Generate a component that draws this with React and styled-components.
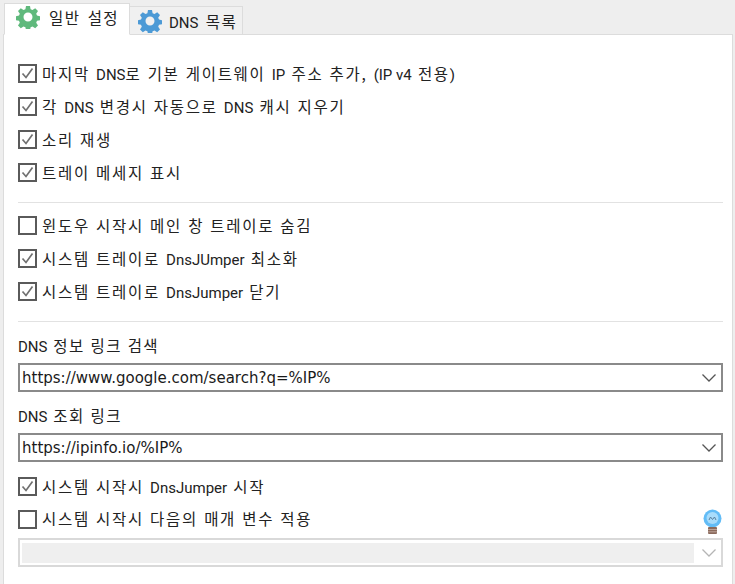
import React from "react";
import styled, { createGlobalStyle } from "styled-components";

const GlobalStyle = createGlobalStyle`
  html, body {
    margin: 0;
    padding: 0;
    background: #eeeeee;
  }
  body {
    width: 735px;
    height: 584px;
    overflow: hidden;
    font-family: "Noto Sans CJK KR", "Liberation Sans", sans-serif;
  }
`;

const Window = styled.div`
  width: 735px;
  height: 584px;
  box-sizing: border-box;
  padding: 3px 2px 0 3px;
  background: #eeeeee;
  overflow: hidden;
`;

const TabBar = styled.div`
  display: flex;
  align-items: flex-end;
  height: 32px;
  padding-left: 1px;
  margin-bottom: -1px;
  position: relative;
  z-index: 1;
`;

const Tab = styled.div`
  display: flex;
  align-items: center;
  box-sizing: border-box;
  gap: ${(p) => (p.$active ? "9px" : "7px")};
  height: ${(p) => (p.$active ? "32px" : "29px")};
  width: ${(p) => (p.$active ? "126px" : "113px")};
  padding-left: ${(p) => (p.$active ? "11px" : "8px")};
  padding-bottom: ${(p) => (p.$active ? "5px" : "0")};
  background: ${(p) => (p.$active ? "#fff" : "#f0f0f0")};
  border: 1px solid #dcdcdc;
  border-bottom: ${(p) => (p.$active ? "1px solid #fff" : "1px solid #dcdcdc")};
  border-left-width: ${(p) => (p.$active ? "1px" : "0")};
  font-size: 15.5px;
  color: #222;
  letter-spacing: 1.4px;
  word-spacing: 2.5px;
`;

const Panel = styled.div`
  box-sizing: border-box;
  height: 560px;
  background: #fff;
  border: 1px solid #dcdcdc;
  padding: 22px 9px 0 14px;
`;

const Group = styled.div`
  display: flex;
  flex-direction: column;
`;

const Row = styled.div`
  display: flex;
  align-items: center;
  height: ${(p) => p.$height || "33px"};
  gap: 5px;
  font-size: 15.5px;
  letter-spacing: 1.7px;
  word-spacing: 1px;
  color: #222;
  white-space: nowrap;
`;

const RowText = styled.span`
  position: relative;
  top: -1px;
`;

const Latin = styled.span`
  font-family: Roboto, "Liberation Sans", sans-serif;
  font-size: 15px;
  letter-spacing: 0;
  word-spacing: 0;
`;

const Box = styled.span`
  display: flex;
  align-items: center;
  justify-content: center;
  box-sizing: border-box;
  width: 19px;
  height: 19px;
  flex: none;
  background: #fff;
  border: 2px solid #5a5a5a;
`;

const Divider = styled.div`
  height: 1px;
  background: #e2e2e2;
  margin: ${(p) => p.$margin};
`;

const FieldLabel = styled.div`
  height: 21px;
  font-size: 15.5px;
  letter-spacing: 1.4px;
  word-spacing: 1px;
  line-height: 19px;
  color: #222;
  margin-bottom: 6px;
`;

const Select = styled.div`
  display: flex;
  align-items: center;
  justify-content: space-between;
  box-sizing: border-box;
  height: 29px;
  padding: 0 2px 0 2px;
  margin-top: ${(p) => p.$before || "0"};
  margin-bottom: ${(p) => p.$after || "0"};
  background: #fff;
  border: 2px solid ${(p) => (p.$disabled ? "#d9d9d9" : "#8a8a8a")};
  font-family: "DejaVu Sans", sans-serif;
  font-size: 15px;
  color: #1a1a1a;
`;

const DisabledFill = styled.div`
  width: 672px;
  height: 20px;
  background: #efefef;
`;

const HintRow = styled.div`
  display: flex;
  align-items: flex-start;
  justify-content: space-between;
`;

const BulbHolder = styled.span`
  display: flex;
  height: 26px;
  margin: 6px 1px 0 0;
`;

const Gear = ({ color }) => (
  <svg width="24" height="24" viewBox="0 0 24 24">
    <path
      fill={color}
      fillRule="evenodd"
      d="M10 1h4l.6 3.2 1.9.8 2.7-1.8 2.8 2.8-1.8 2.7.8 1.9 3 .6v4l-3 .6-.8 1.9 1.8 2.7-2.8 2.8-2.7-1.8-1.9.8-.6 3h-4l-.6-3-1.9-.8-2.7 1.8-2.8-2.8 1.8-2.7-.8-1.9-3-.6v-4l3-.6.8-1.9-1.8-2.7 2.8-2.8 2.7 1.8 1.9-.8zM12 7.5a4.5 4.5 0 1 0 0 9 4.5 4.5 0 0 0 0-9z"
    />
  </svg>
);

const Tick = () => (
  <svg width="15" height="15" viewBox="0 0 15 15">
    <path d="M2.5 7.5l3.5 4 6.5-9" fill="none" stroke="#707070" strokeWidth="1.7" />
  </svg>
);

const Chevron = ({ color }) => (
  <svg width="16" height="10" viewBox="0 0 16 10" style={{ marginRight: 2 }}>
    <path d="M1.5 1.5L8 8l6.5-6.5" fill="none" stroke={color} strokeWidth="1.3" />
  </svg>
);

const Bulb = () => (
  <svg width="19" height="26" viewBox="0 0 19 26">
    <circle cx="9.5" cy="9.5" r="9" fill="#62bcf6" />
    <circle cx="9.5" cy="9" r="6" fill="#a8dcfb" />
    <path d="M6 11l1.5-3 2 2.5 2-2.5 1.5 3" fill="none" stroke="#5a7f9c" strokeWidth="1" />
    <rect x="5" y="18" width="9" height="7" rx="1" fill="#8a6a5c" />
    <path d="M5 20.5h9M5 22.8h9" stroke="#c9b3a8" strokeWidth="0.8" />
  </svg>
);

const Check = ({ checked, height, children }) => (
  <Row $height={height}>
    <Box>{checked && <Tick />}</Box>
    <RowText>{children}</RowText>
  </Row>
);

export default function App() {
  return (
    <>
      <GlobalStyle />
      <Window>
        <TabBar>
          <Tab $active>
            <Gear color="#5fb97c" />
            일반 설정
          </Tab>
          <Tab>
            <Gear color="#4c9ad6" />
            <span>
              <Latin>DNS</Latin> 목록
            </span>
          </Tab>
        </TabBar>
        <Panel>
          <Group>
            <Check checked>
              마지막 <Latin>DNS</Latin>로 기본 게이트웨이 <Latin>IP</Latin> 주소 추가, <Latin>(IP v4</Latin> 전용<Latin>)</Latin>
            </Check>
            <Check checked>
              각 <Latin>DNS</Latin> 변경시 자동으로 <Latin>DNS</Latin> 캐시 지우기
            </Check>
            <Check checked>소리 재생</Check>
            <Check checked>트레이 메세지 표시</Check>
          </Group>
          <Divider $margin="13px 0 6px" />
          <Group>
            <Check>윈도우 시작시 메인 창 트레이로 숨김</Check>
            <Check checked>
              시스템 트레이로 <Latin>DnsJUmper</Latin> 최소화
            </Check>
            <Check checked>
              시스템 트레이로 <Latin>DnsJumper</Latin> 닫기
            </Check>
          </Group>
          <Divider $margin="13px 0 14px" />
          <FieldLabel>
            <Latin>DNS</Latin> 정보 링크 검색
          </FieldLabel>
          <Select $after="14px">
            https://www.google.com/search?q=%IP%
            <Chevron color="#555" />
          </Select>
          <FieldLabel>
            <Latin>DNS</Latin> 조회 링크
          </FieldLabel>
          <Select $after="8px">
            https://ipinfo.io/%IP%
            <Chevron color="#555" />
          </Select>
          <Check checked>
            시스템 시작시 <Latin>DnsJumper</Latin> 시작
          </Check>
          <HintRow>
            <Check height="32px">시스템 시작시 다음의 매개 변수 적용</Check>
            <BulbHolder>
              <Bulb />
            </BulbHolder>
          </HintRow>
          <Select $disabled $before="3px">
            <DisabledFill />
            <Chevron color="#b5b5b5" />
          </Select>
        </Panel>
      </Window>
    </>
  );
}
